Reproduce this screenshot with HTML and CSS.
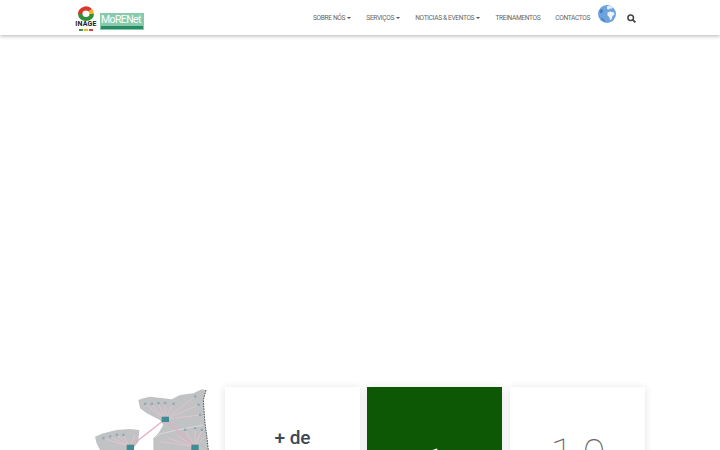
FILE: index.html
```html
<!DOCTYPE html>
<html lang="pt">
<head>
    <meta charset="UTF-8">
    <meta name="viewport" content="width=device-width, initial-scale=1.0">
    <title>MoRENet</title>
    <link rel="stylesheet" href="styles.css">
</head>
<body>
    <nav class="navbar">
        <div class="container nav-inner">
            <a class="brand" href="#">
                <span class="inage">
                    <svg class="inage-mark" width="18" height="15" viewBox="0 0 18 15">
                        <path d="M1 8a8 7.500 0 0 1 14-5L11.500 5.500A3.500 3 0 0 0 5.500 8z" fill="#d8392b"/>
                        <path d="M15 3a8 7.500 0 0 1 2 5h-4.500a3.500 3 0 0 0-1-2.500z" fill="#f2b01e"/>
                        <path d="M1 8a8 7 0 0 0 16 0h-4.500a3.500 3 0 0 1-7 0z" fill="#2f8f3a"/>
                    </svg>
                    <span class="inage-name">INAGE</span>
                    <span class="inage-dots"><i class="dot-g"></i><i class="dot-y"></i><i class="dot-r"></i></span>
                </span>
                <span class="morenet">
                    <span class="morenet-name">MoRENet</span>
                    <span class="morenet-bar"></span>
                </span>
            </a>
            <ul class="menu">
                <li>Sobre Nós <span class="caret"></span></li>
                <li>Serviços <span class="caret"></span></li>
                <li>Noticias &amp; Eventos <span class="caret"></span></li>
                <li>Treinamentos</li>
                <li>Contactos</li>
            </ul>
            <svg class="globe" width="18" height="18" viewBox="0 0 18 18">
                <circle cx="9" cy="9" r="9" fill="#6fa3dc"/>
                <path d="M9 1.500c2-.8 4.500-.3 6 1.200l-1.500 1-1.500-.3-1 1.200-2-.6z" fill="#e6eef7"/>
                <path d="M9.500 7.500l3-1 3.500 1 .5 2-2 1.500-.8 3-1.500 1-1-3-1.700-1.500z" fill="#eef3f9"/>
                <path d="M1.500 6l2-2 1.500 1-.5 2.500-2 1z" fill="#3f7cc4"/>
                <path d="M3 12c1.500 1.500 3 3 5 4.500-2.500.2-5-2-5-4.500z" fill="#3f7cc4"/>
            </svg>
            <svg class="search" width="9" height="9" viewBox="0 0 9 9">
                <circle cx="3.700" cy="3.700" r="2.800" fill="none" stroke="#444" stroke-width="1.500"/>
                <path d="M5.800 5.800L8.400 8.400" stroke="#444" stroke-width="1.800"/>
            </svg>
        </div>
    </nav>

    <main class="container stats">
        <div class="stat-col">
            <svg class="map" width="120" height="63" viewBox="30 21 360 189">
                <!-- regions -->
                <path d="M175 60L190 55 210 50 250 55 275 58 300 45 340 40 365 28 378 30 370 60 372 90 375 130 380 165 385 210 220 210 220 175 235 160 250 135 240 120 200 100 180 85z" fill="#c0c2c3"/>
                <path d="M45 170L70 160 110 150 150 147 178 150 175 185 160 205 150 210 60 210 50 190z" fill="#c0c2c3"/>
                <path d="M378 30L370 60 372 90 375 130 380 165 385 210" fill="none" stroke="#555" stroke-width="3" stroke-dasharray="5 3"/>
                <path d="M225 172L240 162 290 150 370 135" fill="none" stroke="#e6e6e6" stroke-width="2"/>
                <!-- links -->
                <g stroke="#e8c4d0" stroke-width="2.500" fill="none">
                    <path d="M255 118L195 72M255 118L215 72M255 118L235 70M255 118L255 70M255 118L280 72M255 118L345 50M255 118L355 75M255 118L360 105"/>
                    <path d="M150 200L70 175M150 200L90 170M150 200L110 165M150 200L130 165M150 200L165 165"/>
                    <path d="M345 200L240 185M345 200L265 175M345 200L290 165M345 200L315 150M345 200L345 145M345 200L365 150M345 200L375 170"/>
                </g>
                <g stroke="#e3b0c0" stroke-width="4" fill="none">
                    <path d="M255 118L150 200M255 118L345 200"/>
                </g>
                <!-- sites -->
                <g fill="#8fa9b6">
                    <rect x="192" y="68" width="7" height="7"/><rect x="212" y="68" width="7" height="7"/>
                    <rect x="232" y="66" width="7" height="7"/><rect x="252" y="66" width="7" height="7"/>
                    <rect x="277" y="68" width="7" height="7"/><rect x="342" y="46" width="7" height="7"/>
                    <rect x="352" y="71" width="7" height="7"/><rect x="357" y="101" width="7" height="7"/>
                    <rect x="67" y="171" width="7" height="7"/><rect x="87" y="166" width="7" height="7"/>
                    <rect x="107" y="161" width="7" height="7"/><rect x="127" y="161" width="7" height="7"/>
                    <rect x="312" y="146" width="7" height="7"/><rect x="342" y="141" width="7" height="7"/>
                    <rect x="362" y="146" width="7" height="7"/>
                </g>
                <g fill="#3f8c92">
                    <rect x="245" y="110" width="22" height="16"/>
                    <rect x="140" y="194" width="22" height="16"/>
                    <rect x="334" y="194" width="22" height="16"/>
                </g>
            </svg>
        </div>
        <div class="stat-col">
            <div class="card">
                <h3 class="card-title">+ de</h3>
            </div>
        </div>
        <div class="stat-col">
            <div class="card card-green">
                <div class="card-number">1</div>
            </div>
        </div>
        <div class="stat-col">
            <div class="card">
                <div class="card-number">10</div>
            </div>
        </div>
    </main>
</body>
</html>
```

FILE: styles.css
```css
html, body {
    margin: 0;
    height: 450px;
    overflow: hidden;
}
body {
    font-family: Roboto, "Liberation Sans", sans-serif;
    background: #fff;
}
.container {
    width: 570px;
    margin: 0 auto;
}
.navbar {
    height: 35px;
    background: #fff;
    box-shadow: 0 1px 4px rgba(0,0,0,0.3);
}
.nav-inner {
    display: flex;
    align-items: center;
    height: 35px;
}
.brand {
    display: flex;
    align-items: flex-start;
    text-decoration: none;
}
.inage {
    display: flex;
    flex-direction: column;
    align-items: center;
    width: 22px;
    margin-top: 1px;
}
.inage-mark {
    display: block;
}
.inage-name {
    font-size: 7px;
    font-weight: 700;
    line-height: 7px;
    letter-spacing: 0.2px;
    color: #222;
}
.inage-dots {
    display: flex;
    gap: 1px;
    margin-top: 1px;
}
.inage-dots i {
    width: 4px;
    height: 2px;
}
.dot-g { background: #3a9a45; }
.dot-y { background: #e9b52a; }
.dot-r { background: #c8473a; }
.morenet {
    display: block;
    width: 44px;
    height: 17px;
    margin: 8px 0 0 3px;
    background: #86cbae;
}
.morenet-name {
    display: block;
    font-size: 10.500px;
    line-height: 13px;
    letter-spacing: -0.6px;
    color: #fff;
    padding-left: 1px;
    white-space: nowrap;
}
.morenet-bar {
    display: block;
    height: 3px;
    margin: 0 1px;
    background: #2b8a63;
}
.menu {
    display: flex;
    gap: 15px;
    list-style: none;
    margin: 0 0 0 auto;
    padding: 0;
    font-size: 6.600px;
    letter-spacing: -0.35px;
    color: #666;
    text-transform: uppercase;
}
.caret {
    display: inline-block;
    margin-left: 1px;
    vertical-align: middle;
    border-top: 2.500px solid #555;
    border-left: 2.500px solid transparent;
    border-right: 2.500px solid transparent;
}
.globe {
    margin: -7px 0 0 8px;
}
.search {
    margin: 1px 9px 0 11px;
}
.stats {
    display: grid;
    grid-template-columns: repeat(4, 142.490px);
    margin-top: 352px;
}
.stat-col {
    padding-left: 7.500px;
}
.map {
    display: block;
    margin-left: 7.500px;
}
.card {
    height: 200px;
    background: #fff;
    box-shadow: 0 1px 8px rgba(0,0,0,0.12);
    text-align: center;
}
.card-title {
    margin: 0;
    padding-top: 39px;
    font-size: 19px;
    line-height: 24px;
    font-weight: 500;
    color: #3c4858;
}
.card-green {
    background: #0d5804;
}
.card-number {
    padding: 43px 0 0 10px;
    font-size: 42px;
    line-height: 50px;
    font-weight: 100;
    letter-spacing: 9px;
    color: #666;
}
.card-green .card-number {
    padding: 53px 0 0;
    letter-spacing: 0;
    color: #fff;
}
```
